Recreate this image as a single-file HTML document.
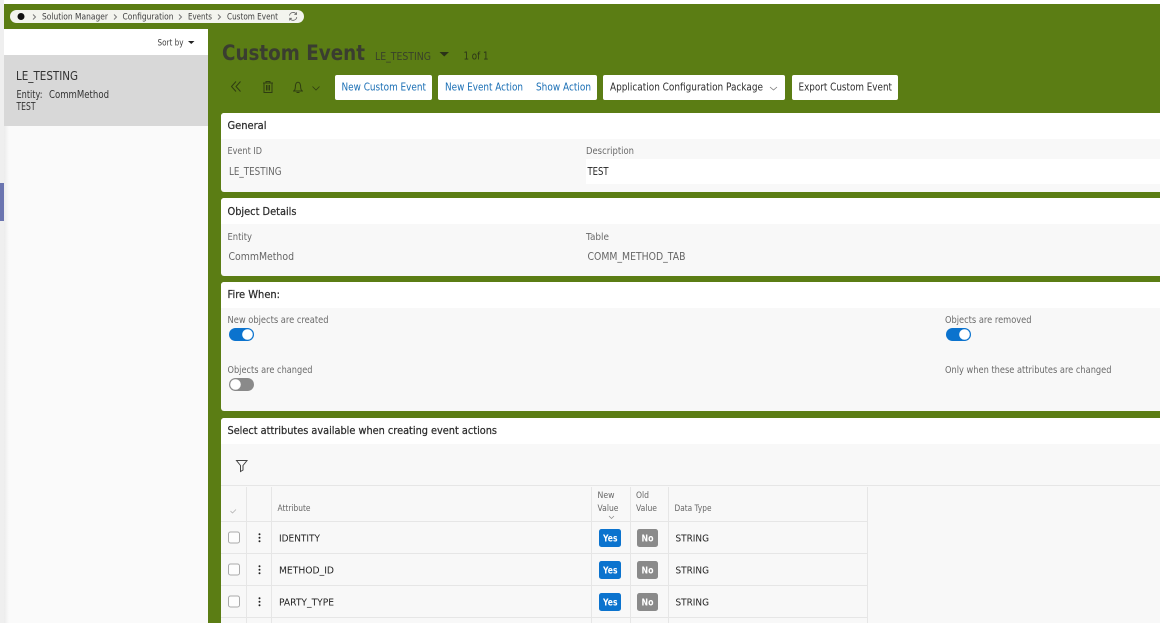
<!DOCTYPE html>
<html><head><meta charset="utf-8"><style>
html,body{margin:0;padding:0;width:1160px;height:623px;overflow:hidden;background:#fff}
svg{display:block}
text{font-family:"DejaVu Sans","Liberation Sans",sans-serif;font-size:10.2px;fill:#2e2e2e}
.l{fill:#6a6a6a;font-size:9.8px}
.h{fill:#2a2a2a;font-size:10.4px;stroke:#2a2a2a;stroke-width:.22px}
.b{fill:#1a6fb5;font-size:10.2px}
.v{fill:#666;font-size:10.2px}
.t{fill:#222;font-size:10px}
.th{fill:#666;font-size:8.6px}
.bc{fill:#3e3e3e;font-size:9px}
.bd{fill:#fff;font-weight:bold;font-size:9.6px}
.ln{stroke:#e6e6e6;stroke-width:1;fill:none}
</style></head><body>
<svg width="1160" height="623" viewBox="0 0 1160 623" xmlns="http://www.w3.org/2000/svg">
<defs><linearGradient id="sh" x1="0" x2="1" y1="0" y2="0"><stop offset="0" stop-color="#ececec"/><stop offset="1" stop-color="#fafafa"/></linearGradient></defs>
<rect width="1160" height="623" fill="#fff"/>
<rect x="4" y="4" width="1156" height="619" fill="#5b7d14"/>
<rect x="0" y="0" width="4" height="623" fill="#efefef"/>
<rect x="0" y="183" width="4" height="38" fill="#6b75b0"/>

<!-- breadcrumb -->
<rect x="10" y="10" width="294" height="13" rx="6.5" fill="#f3f4ee"/>
<circle cx="21" cy="16.5" r="3.5" fill="#111"/>
<path class="ln" style="stroke:#777" d="M33 14.500l2.500 2.500-2.500 2.500M114 14.500l2.500 2.500-2.500 2.500M179 14.500l2.500 2.500-2.500 2.500M218 14.500l2.500 2.500-2.500 2.500"/>
<text class="bc" x="42" y="19.500" textLength="66" lengthAdjust="spacingAndGlyphs">Solution Manager</text>
<text class="bc" x="122.500" y="19.500" textLength="51" lengthAdjust="spacingAndGlyphs">Configuration</text>
<text class="bc" x="188" y="19.500" textLength="24" lengthAdjust="spacingAndGlyphs">Events</text>
<text class="bc" x="227" y="19.500" textLength="51" lengthAdjust="spacingAndGlyphs">Custom Event</text>
<path d="M289.500 15.500a3.800 3.800 0 0 1 6.800-1.500M296.800 17a3.800 3.800 0 0 1-6.800 1.800M296.500 12.300v2.200h-2.200M289.700 20.500v-2.200h2.200" fill="none" stroke="#666" stroke-width=".8"/>

<!-- left panel -->
<rect x="4" y="29" width="204" height="594" fill="#fafafa"/>
<rect x="4" y="126" width="5" height="497" fill="url(#sh)"/>
<rect x="4" y="29" width="204" height="26" fill="#fff"/>
<rect x="4" y="55" width="204" height="71" fill="#d8d8d8"/>
<text class="bc" x="157.500" y="45.500" textLength="26" lengthAdjust="spacingAndGlyphs">Sort by</text>
<path d="M188 41h6.500l-3.250 3z" fill="#222"/>
<text x="16" y="80" style="font-size:12px;fill:#333" textLength="62" lengthAdjust="spacingAndGlyphs">LE_TESTING</text>
<text x="16.500" y="98" style="font-size:10.200px;fill:#333" textLength="26" lengthAdjust="spacingAndGlyphs">Entity:</text>
<text x="49" y="98" style="font-size:10.200px;fill:#333" textLength="60" lengthAdjust="spacingAndGlyphs">CommMethod</text>
<text x="16.500" y="110" style="font-size:10.200px;fill:#333" textLength="19" lengthAdjust="spacingAndGlyphs">TEST</text>

<!-- title -->
<text x="222" y="60" style="font-size:21.500px;font-weight:bold;fill:#3a3d30" textLength="143" lengthAdjust="spacingAndGlyphs">Custom Event</text>
<text x="375" y="60" style="font-size:10.400px;fill:#38402a" textLength="56" lengthAdjust="spacingAndGlyphs">LE_TESTING</text>
<path d="M439.500 52h9.500l-4.750 4.500z" fill="#2b3318"/>
<text x="463.500" y="59.500" style="font-size:10.200px;fill:#2b3318" textLength="25" lengthAdjust="spacingAndGlyphs">1 of 1</text>

<!-- toolbar icons -->
<path d="M236 81.500l-4.500 5 4.500 5M240.500 81.500l-4.500 5 4.500 5" fill="none" stroke="#2f3d12" stroke-width="1"/>
<path d="M263 83h10M266 83v-1.500h4V83M264 83v9.500h8V83M266.500 85v5.500M268 85v5.500M269.500 85v5.500" fill="none" stroke="#2f3d12" stroke-width="1"/>
<path d="M293 91h10M294 91c1.800-2 1.200-4 1.500-5.800.3-1.800 1.200-3 2.500-3s2.200 1.200 2.500 3c.3 1.800-.3 3.800 1.500 5.800M296.500 92.500h3" fill="none" stroke="#2f3d12" stroke-width="1"/>
<path d="M312.500 86.500l3.500 3.500 3.500-3.500" fill="none" stroke="#2f3d12" stroke-width=".8"/>

<!-- toolbar buttons -->
<rect x="335" y="75" width="97" height="25" rx="2" fill="#fff"/>
<text class="b" x="341.500" y="90.500" textLength="84.500" lengthAdjust="spacingAndGlyphs">New Custom Event</text>
<rect x="438" y="75" width="159" height="25" rx="2" fill="#fff"/>
<text class="b" x="445" y="90.500" textLength="78" lengthAdjust="spacingAndGlyphs">New Event Action</text>
<text class="b" x="536" y="90.500" textLength="55" lengthAdjust="spacingAndGlyphs">Show Action</text>
<rect x="603" y="75" width="182" height="25" rx="2" fill="#fff"/>
<text x="610" y="90.500" textLength="153" lengthAdjust="spacingAndGlyphs">Application Configuration Package</text>
<path d="M770 87l3.500 3 3.500-3" fill="none" stroke="#777" stroke-width=".8"/>
<rect x="792" y="75" width="106" height="25" rx="2" fill="#fff"/>
<text x="798.500" y="90.500" textLength="93.500" lengthAdjust="spacingAndGlyphs">Export Custom Event</text>

<!-- General -->
<rect x="221" y="113" width="945" height="79" rx="3" fill="#f8f8f8"/>
<path d="M221 139v-23a3 3 0 0 1 3-3h942v26z" fill="#fff"/>
<text class="h" x="227.500" y="129" textLength="39" lengthAdjust="spacingAndGlyphs">General</text>
<text class="l" x="227.500" y="154" textLength="34.500" lengthAdjust="spacingAndGlyphs">Event ID</text>
<text class="v" x="229" y="175" textLength="52.500" lengthAdjust="spacingAndGlyphs">LE_TESTING</text>
<text class="l" x="586" y="154" textLength="48" lengthAdjust="spacingAndGlyphs">Description</text>
<rect x="586" y="159" width="574" height="25" fill="#fff"/>
<text x="587.500" y="175" style="fill:#222" textLength="21" lengthAdjust="spacingAndGlyphs">TEST</text>

<!-- Object Details -->
<rect x="221" y="198" width="945" height="78" rx="3" fill="#f8f8f8"/>
<path d="M221 224v-23a3 3 0 0 1 3-3h942v26z" fill="#fff"/>
<text class="h" x="227.500" y="215" textLength="69" lengthAdjust="spacingAndGlyphs">Object Details</text>
<text class="l" x="227.500" y="240" textLength="24.500" lengthAdjust="spacingAndGlyphs">Entity</text>
<text class="v" x="228.500" y="260" textLength="65.500" lengthAdjust="spacingAndGlyphs">CommMethod</text>
<text class="l" x="586" y="240" textLength="23" lengthAdjust="spacingAndGlyphs">Table</text>
<text class="v" x="587.500" y="260" textLength="98" lengthAdjust="spacingAndGlyphs">COMM_METHOD_TAB</text>

<!-- Fire When -->
<rect x="221" y="282" width="945" height="129" rx="3" fill="#f8f8f8"/>
<path d="M221 308v-23a3 3 0 0 1 3-3h942v26z" fill="#fff"/>
<text class="h" x="227.500" y="298" textLength="52.500" lengthAdjust="spacingAndGlyphs">Fire When:</text>
<text class="l" x="227.500" y="323" textLength="101" lengthAdjust="spacingAndGlyphs">New objects are created</text>
<rect x="229" y="328" width="25" height="13" rx="6.500" fill="#0b73ce"/>
<circle cx="247.500" cy="334.500" r="5.300" fill="#fff"/>
<text class="l" x="227.500" y="373" textLength="85" lengthAdjust="spacingAndGlyphs">Objects are changed</text>
<rect x="229" y="378" width="25" height="13" rx="6.500" fill="#8a8a8a"/>
<circle cx="235.500" cy="384.500" r="5.300" fill="#fff"/>
<text class="l" x="945" y="323" textLength="86.500" lengthAdjust="spacingAndGlyphs">Objects are removed</text>
<rect x="946" y="328" width="25" height="13" rx="6.500" fill="#0b73ce"/>
<circle cx="964.500" cy="334.500" r="5.300" fill="#fff"/>
<text class="l" x="945" y="373" textLength="166.500" lengthAdjust="spacingAndGlyphs">Only when these attributes are changed</text>

<!-- Attributes -->
<rect x="221" y="418" width="945" height="210" rx="3" fill="#f8f8f8"/>
<path d="M221 444v-23a3 3 0 0 1 3-3h942v26z" fill="#fff"/>
<text class="h" x="227.500" y="434" textLength="269.500" lengthAdjust="spacingAndGlyphs">Select attributes available when creating event actions</text>
<path d="M236.500 460.500h10.500l-4 5v4.500l-2.500 1.500v-6z" fill="none" stroke="#444" stroke-width="1"/>
<path class="ln" d="M221 485.500h939M221 521.500h646M221 553.500h646M221 585.500h646M221 617.500h646"/>
<path class="ln" d="M246.500 487v136M271.500 487v136M591.500 487v136M630.500 487v136M668.500 487v136M867.500 487v136"/>
<path d="M230.500 511l2 2 3.500-3.500" fill="none" stroke="#aaa" stroke-width=".7"/>
<text class="th" x="277.500" y="511" textLength="33" lengthAdjust="spacingAndGlyphs">Attribute</text>
<text class="th" x="597.500" y="498" textLength="17" lengthAdjust="spacingAndGlyphs">New</text>
<text class="th" x="597.500" y="511" textLength="21" lengthAdjust="spacingAndGlyphs">Value</text>
<path d="M609 516l2.500 2.500 2.500-2.500" fill="none" stroke="#888" stroke-width=".7"/>
<text class="th" x="636" y="498" textLength="13" lengthAdjust="spacingAndGlyphs">Old</text>
<text class="th" x="636" y="511" textLength="21" lengthAdjust="spacingAndGlyphs">Value</text>
<text class="th" x="674.500" y="511" textLength="37" lengthAdjust="spacingAndGlyphs">Data Type</text>

<!-- row 1 -->
<rect x="228.500" y="532" width="11" height="11" rx="2" fill="#fdfdfd" stroke="#aaa"/>
<circle cx="259.500" cy="534.300" r="1" fill="#222"/><circle cx="259.500" cy="537.800" r="1" fill="#222"/><circle cx="259.500" cy="541.300" r="1" fill="#222"/>
<text class="t" x="279" y="541.500" textLength="41" lengthAdjust="spacingAndGlyphs">IDENTITY</text>
<rect x="599" y="529" width="22" height="18" rx="2.500" fill="#0b73ce"/>
<text class="bd" x="603" y="541.500" textLength="14.500" lengthAdjust="spacingAndGlyphs">Yes</text>
<rect x="637" y="529" width="21" height="18" rx="2.500" fill="#8a8a8a"/>
<text class="bd" x="641.500" y="541.500" textLength="12" lengthAdjust="spacingAndGlyphs">No</text>
<text class="t" x="675.500" y="541.500" textLength="33.500" lengthAdjust="spacingAndGlyphs">STRING</text>

<!-- row 2 -->
<rect x="228.500" y="564" width="11" height="11" rx="2" fill="#fdfdfd" stroke="#aaa"/>
<circle cx="259.500" cy="566.300" r="1" fill="#222"/><circle cx="259.500" cy="569.800" r="1" fill="#222"/><circle cx="259.500" cy="573.300" r="1" fill="#222"/>
<text class="t" x="279" y="573.500" textLength="55" lengthAdjust="spacingAndGlyphs">METHOD_ID</text>
<rect x="599" y="561" width="22" height="18" rx="2.500" fill="#0b73ce"/>
<text class="bd" x="603" y="573.500" textLength="14.500" lengthAdjust="spacingAndGlyphs">Yes</text>
<rect x="637" y="561" width="21" height="18" rx="2.500" fill="#8a8a8a"/>
<text class="bd" x="641.500" y="573.500" textLength="12" lengthAdjust="spacingAndGlyphs">No</text>
<text class="t" x="675.500" y="573.500" textLength="33.500" lengthAdjust="spacingAndGlyphs">STRING</text>

<!-- row 3 -->
<rect x="228.500" y="596" width="11" height="11" rx="2" fill="#fdfdfd" stroke="#aaa"/>
<circle cx="259.500" cy="598.300" r="1" fill="#222"/><circle cx="259.500" cy="601.800" r="1" fill="#222"/><circle cx="259.500" cy="605.300" r="1" fill="#222"/>
<text class="t" x="279" y="605.500" textLength="55" lengthAdjust="spacingAndGlyphs">PARTY_TYPE</text>
<rect x="599" y="593" width="22" height="18" rx="2.500" fill="#0b73ce"/>
<text class="bd" x="603" y="605.500" textLength="14.500" lengthAdjust="spacingAndGlyphs">Yes</text>
<rect x="637" y="593" width="21" height="18" rx="2.500" fill="#8a8a8a"/>
<text class="bd" x="641.500" y="605.500" textLength="12" lengthAdjust="spacingAndGlyphs">No</text>
<text class="t" x="675.500" y="605.500" textLength="33.500" lengthAdjust="spacingAndGlyphs">STRING</text>
</svg>
</body></html>
